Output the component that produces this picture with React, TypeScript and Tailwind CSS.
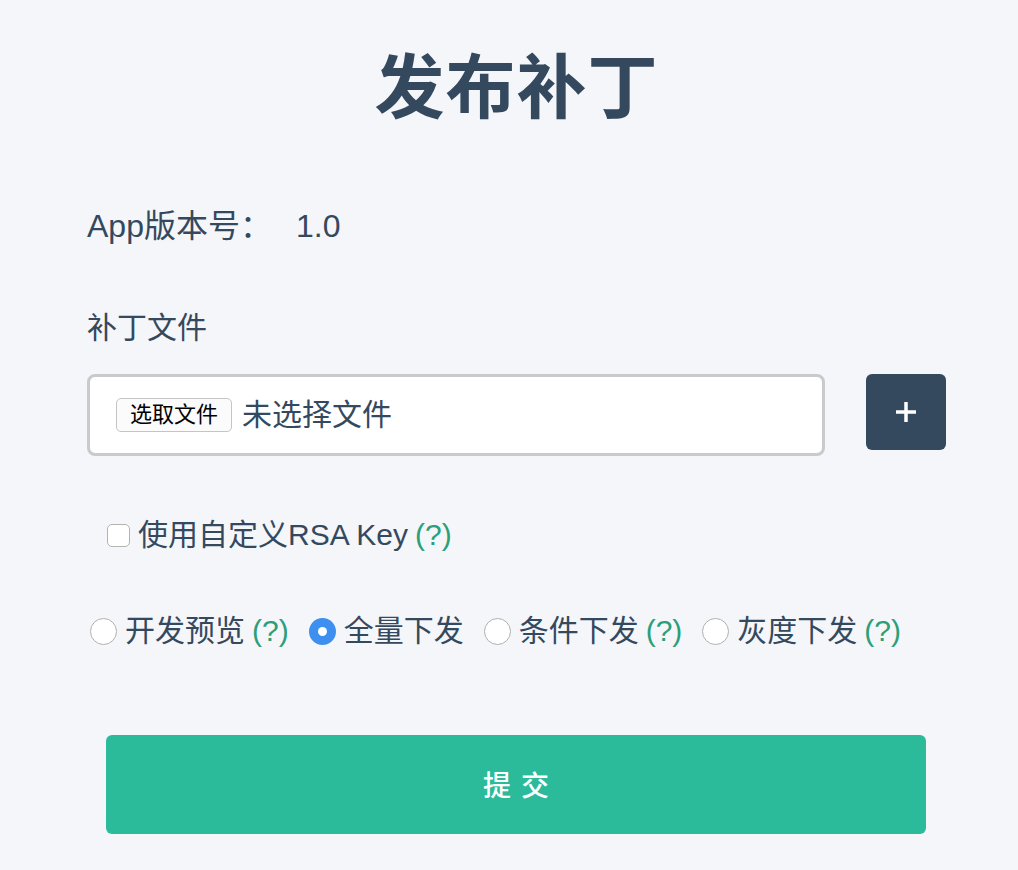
import React, { useState } from 'react';

const FONT = "font-['Liberation_Sans','Noto_Sans_CJK_SC',sans-serif]";

const modes = [
  { id: 'dev', label: '开发预览', help: true },
  { id: 'all', label: '全量下发', help: false },
  { id: 'cond', label: '条件下发', help: true },
  { id: 'gray', label: '灰度下发', help: true },
];

const Help = () => <span className="ml-[7px] text-[#2a9f7a]">(?)</span>;

export default function App() {
  const [mode, setMode] = useState('all');
  const [customKey, setCustomKey] = useState(false);

  return (
    <div className={`min-h-[870px] w-full bg-[#f4f6f9] text-[#34495e] ${FONT}`}>
      <div className="ml-[87px] flex w-[859px] flex-col">
        {/* Title */}
        <h1 className="mt-[54px] text-center text-[70px] font-semibold leading-none tracking-[1px]">发布补丁</h1>

        <div className="mt-[86px] text-[32px] leading-none">
          App版本号：<span className="ml-[24px]">1.0</span>
        </div>

        <div className="mt-[71px] text-[30px] leading-none">补丁文件</div>

        {/* File picker */}
        <div className="mt-[31px] flex items-start">
          <div className="flex h-[82px] w-[738px] items-center rounded-[8px] border-[3px] border-[#c9cacc] bg-white pl-[26px]">
            <button className="flex h-[34px] items-center rounded-[5px] border border-[#c4c4c4] bg-[#fbfbfb] px-[13px] text-[22px] leading-none text-black">
              选取文件
            </button>
            <span className="ml-[10px] text-[30px] leading-none">未选择文件</span>
          </div>
          <button className="ml-[41px] flex h-[76px] w-[80px] items-center justify-center rounded-[6px] bg-[#34495e] text-white">
            <svg width="22" height="22" viewBox="0 0 22 22">
              <path d="M11 1v20M1 11h20" stroke="white" strokeWidth="3.5" />
            </svg>
          </button>
        </div>

        {/* Custom key */}
        <label className="ml-[20px] mt-[64px] flex h-[30px] cursor-pointer items-center text-[30px] leading-none">
          <span
            onClick={() => setCustomKey(!customKey)}
            className="mr-[8px] h-[23px] w-[23px] rounded-[5px] border border-[#b3b3b3] bg-white"
          />
          使用自定义RSA Key
          <Help />
        </label>

        {/* Modes */}
        <div className="ml-[3px] mt-[66px] flex h-[30px] items-center text-[30px] leading-none">
          {modes.map(m => (
            <label key={m.id} className="mr-[20px] flex cursor-pointer items-center" onClick={() => setMode(m.id)}>
              {mode === m.id ? (
                <span className="mr-[8px] flex h-[27px] w-[27px] items-center justify-center rounded-full bg-[#3d8ff0]">
                  <span className="h-[9px] w-[9px] rounded-full bg-white" />
                </span>
              ) : (
                <span className="mr-[8px] h-[27px] w-[27px] rounded-full border border-[#b0b0b0] bg-white" />
              )}
              {m.label}
              {m.help && <Help />}
            </label>
          ))}
        </div>

        {/* Submit */}
        <button className="ml-[19px] mt-[89px] h-[99px] w-[820px] rounded-[6px] bg-[#2bbb9b] pl-[10px] pt-[4px] text-[28px] font-medium tracking-[10px] text-white">
          提交
        </button>
      </div>
    </div>
  );
}
